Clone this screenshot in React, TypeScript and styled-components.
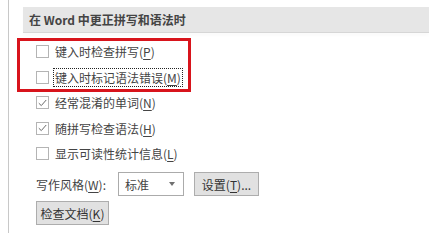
import styled, { createGlobalStyle } from 'styled-components';

const GlobalStyle = createGlobalStyle`
    html, body {
        margin: 0;
        padding: 0;
        background: #fff;
    }
    body {
        font-family: "Noto Sans CJK SC", "Liberation Sans", sans-serif;
        font-size: 12px;
        color: #444;
    }
`;

const Page = styled.div`
    width: 429px;
    height: 233px;
    overflow: hidden;
    display: flex;
`;

const Panel = styled.div`
    position: relative;
    margin-left: 8px;
    flex: 1;
    border-left: 1px solid #c8c8c8;
    padding-top: 7px;
    display: flex;
    flex-direction: column;
`;

const SectionHeader = styled.div`
    margin-left: 14px;
    height: 25px;
    line-height: 25px;
    padding-left: 6px;
    background: #e6e6e6;
    border-bottom: 1px solid #d6d6d6;
    box-shadow: 0 3px 3px rgba(0, 0, 0, 0.02);
    font-weight: bold;
    color: #444;
    white-space: nowrap;
`;

const Options = styled.div`
    margin-top: 6px;
    padding-left: 27px;
    display: flex;
    flex-direction: column;
`;

const Row = styled.label`
    height: 25.5px;
    display: flex;
    align-items: center;
    gap: 6px;
    white-space: nowrap;
`;

const Box = styled.span`
    width: 11px;
    height: 11px;
    border: 1px solid #b4b4b4;
    background: #fff;
    display: flex;
    align-items: center;
    justify-content: center;
    flex-shrink: 0;
`;

const Text = styled.span<{ $focused?: boolean }>`
    line-height: 17px;
    padding: 0 1px;
    margin-left: -1px;
    outline: ${p => (p.$focused ? '1px dotted #222' : 'none')};
`;

const Key = styled.u`
    text-underline-offset: 2px;
`;

const Highlight = styled.div`
    position: absolute;
    left: 8px;
    top: 38px;
    width: 168px;
    height: 48px;
    border: 3px solid #d8141c;
    pointer-events: none;
`;

const StyleRow = styled.div`
    margin-top: 5.5px;
    padding-left: 27px;
    display: flex;
    align-items: center;
    gap: 10px;
    height: 24px;
    white-space: nowrap;
`;

const FieldLabel = styled.span`
    width: 72px;
`;

const Select = styled.div`
    width: 66px;
    height: 24px;
    box-sizing: border-box;
    border: 1px solid #ababab;
    background: #fff;
    display: flex;
    align-items: center;
    justify-content: space-between;
    padding: 0 8px 0 6px;
`;

const Caret = styled.span`
    width: 0;
    height: 0;
    border-left: 3.5px solid transparent;
    border-right: 3.5px solid transparent;
    border-top: 4px solid #707070;
`;

const Button = styled.div<{ $width: number }>`
    width: ${p => p.$width}px;
    height: 24px;
    box-sizing: border-box;
    border: 1px solid #adadad;
    background: #e1e1e1;
    display: flex;
    align-items: center;
    justify-content: center;
    white-space: nowrap;
    color: #333;
`;

const ButtonRow = styled.div`
    margin-top: 5px;
    padding-left: 27px;
    display: flex;
`;

const Check = () => (
    <svg width="9" height="8" viewBox="0 0 9 8">
        <path d="M0.8 4.2 L3.3 6.6 L8.2 1" fill="none" stroke="#6a6a6a" strokeWidth="1" />
    </svg>
);

const options = [
    { text: '键入时检查拼写', key: 'P', checked: false },
    { text: '键入时标记语法错误', key: 'M', checked: false, focused: true },
    { text: '经常混淆的单词', key: 'N', checked: true },
    { text: '随拼写检查语法', key: 'H', checked: true },
    { text: '显示可读性统计信息', key: 'L', checked: false },
];

export default function App() {
    return (
        <Page>
            <GlobalStyle />
            <Panel>
                <SectionHeader>在 Word 中更正拼写和语法时</SectionHeader>
                <Options>
                    {options.map(o => (
                        <Row key={o.key}>
                            <Box>{o.checked ? <Check /> : null}</Box>
                            <Text $focused={o.focused}>
                                {o.text}(<Key>{o.key}</Key>)
                            </Text>
                        </Row>
                    ))}
                </Options>
                <StyleRow>
                    <FieldLabel>写作风格(<Key>W</Key>):</FieldLabel>
                    <Select>
                        <span>标准</span>
                        <Caret />
                    </Select>
                    <Button $width={65}>设置(<Key>T</Key>)...</Button>
                </StyleRow>
                <ButtonRow>
                    <Button $width={73}>检查文档(<Key>K</Key>)</Button>
                </ButtonRow>
                <Highlight />
            </Panel>
        </Page>
    );
}
